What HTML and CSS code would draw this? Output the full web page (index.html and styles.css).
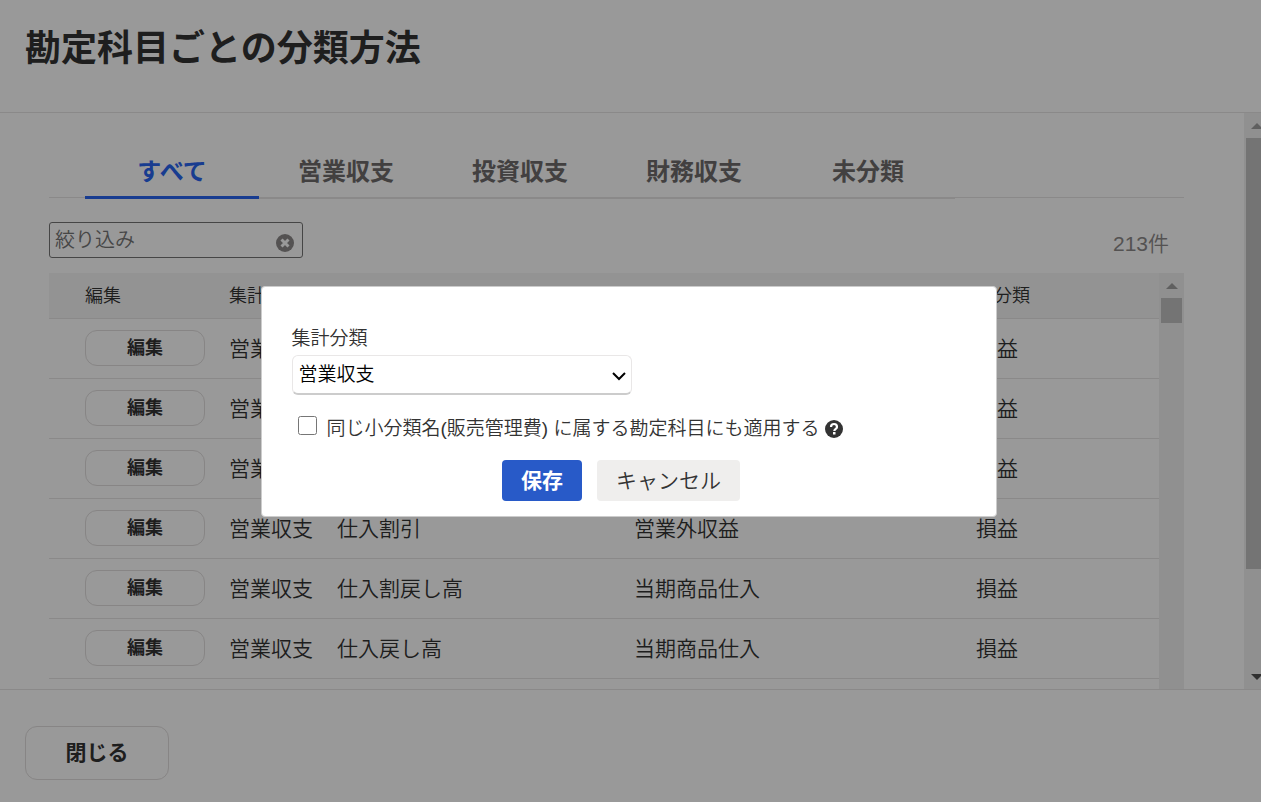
FILE: index.html
```html
<!DOCTYPE html>
<html lang="ja">
<head>
    <meta charset="UTF-8">
    <meta name="viewport" content="width=device-width, initial-scale=1.0">
    <title>勘定科目ごとの分類方法</title>
    <link rel="stylesheet" href="styles.css">
</head>
<body>
    <div class="page">
        <header class="page-header">
            <h1>勘定科目ごとの分類方法</h1>
        </header>

        <main class="page-body">
            <div class="content">
                <nav class="tabs">
                    <a href="#" class="tab active">すべて</a>
                    <a href="#" class="tab">営業収支</a>
                    <a href="#" class="tab">投資収支</a>
                    <a href="#" class="tab">財務収支</a>
                    <a href="#" class="tab">未分類</a>
                </nav>

                <div class="toolbar">
                    <div class="search">
                        <input type="text" placeholder="絞り込み" aria-label="絞り込み">
                        <button type="button" class="clear-btn" aria-label="クリア">
                            <svg viewBox="0 0 18 18" width="18" height="18">
                                <circle cx="9" cy="9" r="9" fill="#8c8989"/>
                                <path d="M5.500 5.500l7 7M12.500 5.500l-7 7" stroke="#fff" stroke-width="3"/>
                            </svg>
                        </button>
                    </div>
                    <span class="count">213件</span>
                </div>

                <div class="table-area">
                    <table>
                        <thead>
                            <tr>
                                <th class="col-edit">編集</th>
                                <th class="col-group">集計分類</th>
                                <th class="col-name">勘定科目名</th>
                                <th class="col-small">小分類</th>
                                <th>大分類</th>
                            </tr>
                        </thead>
                        <tbody>
                            <tr>
                                <td><button type="button" class="edit-btn">編集</button></td>
                                <td>営業収支</td>
                                <td>仕入高</td>
                                <td>当期商品仕入</td>
                                <td>損益</td>
                            </tr>
                            <tr>
                                <td><button type="button" class="edit-btn">編集</button></td>
                                <td>営業収支</td>
                                <td>仕入値引高</td>
                                <td>当期商品仕入</td>
                                <td>損益</td>
                            </tr>
                            <tr>
                                <td><button type="button" class="edit-btn">編集</button></td>
                                <td>営業収支</td>
                                <td>外注費</td>
                                <td>販売管理費</td>
                                <td>損益</td>
                            </tr>
                            <tr>
                                <td><button type="button" class="edit-btn">編集</button></td>
                                <td>営業収支</td>
                                <td>仕入割引</td>
                                <td>営業外収益</td>
                                <td>損益</td>
                            </tr>
                            <tr>
                                <td><button type="button" class="edit-btn">編集</button></td>
                                <td>営業収支</td>
                                <td>仕入割戻し高</td>
                                <td>当期商品仕入</td>
                                <td>損益</td>
                            </tr>
                            <tr>
                                <td><button type="button" class="edit-btn">編集</button></td>
                                <td>営業収支</td>
                                <td>仕入戻し高</td>
                                <td>当期商品仕入</td>
                                <td>損益</td>
                            </tr>
                        </tbody>
                    </table>
                    <div class="scrollbar">
                        <div class="arrow up"></div>
                        <div class="track"><div class="thumb small"></div></div>
                    </div>
                </div>
            </div>
            <div class="scrollbar page-scrollbar">
                <div class="arrow up"></div>
                <div class="track"><div class="thumb large"></div></div>
                <div class="arrow down"></div>
            </div>
        </main>

        <footer class="page-footer">
            <button type="button" class="close-btn">閉じる</button>
        </footer>
    </div>

    <div class="overlay">
        <form class="modal" role="dialog" aria-modal="true" aria-label="集計分類の編集">
            <label for="group">集計分類</label>
            <div class="select-box">
                <select id="group">
                    <option>営業収支</option>
                    <option>投資収支</option>
                    <option>財務収支</option>
                    <option>未分類</option>
                </select>
                <svg class="chevron" viewBox="0 0 14 10" width="14" height="10">
                    <path d="M1 2l6 6 6-6" fill="none" stroke="#000" stroke-width="2"/>
                </svg>
            </div>
            <div class="apply-row">
                <input type="checkbox" id="apply">
                <label for="apply">同じ小分類名(販売管理費) に属する勘定科目にも適用する</label>
                <svg class="help" viewBox="0 0 18 18" width="18" height="18">
                    <circle cx="9" cy="9" r="9" fill="#333"/>
                    <path d="M6 7c0-2 1-3 3-3s3 1 3 3c0 1.800-2.700 1.900-2.700 4" fill="none" stroke="#fff" stroke-width="2.200"/>
                    <rect x="8" y="12" width="2.500" height="2.500" fill="#fff"/>
                </svg>
            </div>
            <div class="modal-buttons">
                <button type="button" class="save-btn">保存</button>
                <button type="button" class="cancel-btn">キャンセル</button>
            </div>
        </form>
    </div>
</body>
</html>
```
FILE: styles.css
```css
* {
    box-sizing: border-box;
    margin: 0;
    padding: 0;
}

body {
    background-color: #fff;
    color: #333;
    font-family: "Liberation Sans", "Noto Sans CJK JP", sans-serif;
    font-weight: 350;
}

button,
input,
select {
    font-family: inherit;
    font-weight: inherit;
    color: inherit;
}

button {
    cursor: pointer;
}

.page {
    display: flex;
    flex-direction: column;
    height: 100vh;
    overflow: hidden;
}

/* Header */
.page-header {
    padding: 22px 25px 36px;
    border-bottom: 1px solid #e6e4e4;
}

.page-header h1 {
    font-size: 36px;
    line-height: 54px;
    font-weight: bold;
}

/* Body */
.page-body {
    flex: 1;
    min-height: 0;
    display: flex;
    overflow: hidden;
}

.content {
    flex: 1;
    min-width: 0;
    display: flex;
    flex-direction: column;
    padding: 33px 60px 0 49px;
}

/* Tabs */
.tabs {
    display: flex;
    height: 52px;
    padding-left: 36px;
    border-bottom: 1px solid #e6e4e4;
}

.tab {
    width: 174px;
    height: 53px;
    border-bottom: 2px solid #e6e4e4;
    color: #6e6b6b;
    font-size: 24px;
    line-height: 52px;
    font-weight: bold;
    text-align: center;
    text-decoration: none;
}

.tab.active {
    border-bottom: 3px solid #2864f0;
    color: #2864f0;
}

/* Search */
.toolbar {
    display: flex;
    justify-content: space-between;
    padding: 24px 15px 7px 0;
}

.search {
    position: relative;
    width: 254px;
}

.search input {
    width: 100%;
    height: 36px;
    padding: 0 36px 0 5px;
    border: 1px solid #767676;
    border-radius: 3px;
    background-color: #fff;
    font-size: 20px;
}

.search input::placeholder {
    color: #757575;
}

.clear-btn {
    position: absolute;
    top: 12px;
    right: 9px;
    width: 18px;
    height: 18px;
    border: none;
    background: none;
}

.clear-btn svg {
    display: block;
}

.count {
    color: #8c8989;
    font-size: 21px;
    line-height: 44px;
}

/* Table */
.table-area {
    flex: 1;
    min-height: 0;
    display: flex;
    overflow: hidden;
}

table {
    flex: 1;
    align-self: flex-start;
    table-layout: fixed;
    border-collapse: separate;
    border-spacing: 0;
}

th,
td {
    border-bottom: 1px solid #e6e4e4;
    text-align: left;
    white-space: nowrap;
}

th {
    height: 46px;
    padding-bottom: 4px;
    background-color: #f5f5f5;
    font-size: 18px;
    font-weight: inherit;
}

td {
    height: 60px;
    padding-bottom: 4px;
    font-size: 21px;
}

td:first-child {
    padding-bottom: 1px;
}

th:first-child,
td:first-child {
    padding-left: 36px;
}

.col-edit {
    width: 180px;
}

.col-group {
    width: 108px;
}

.col-name {
    width: 297px;
}

.col-small {
    width: 342px;
}

.edit-btn {
    display: block;
    width: 120px;
    height: 36px;
    padding-bottom: 4px;
    border: 1px solid #e1dede;
    border-radius: 12px;
    background-color: #fff;
    font-size: 18px;
    font-weight: bold;
}

/* Scrollbars */
.scrollbar {
    flex: none;
    display: flex;
    flex-direction: column;
    width: 25px;
    background-color: #f1f1f1;
}

.page-scrollbar {
    margin-right: -8px;
}

.arrow {
    display: flex;
    align-items: center;
    justify-content: center;
    height: 25px;
}

.arrow::before {
    content: "";
    border: 6px solid transparent;
}

.arrow.up::before {
    border-top: none;
    border-bottom-color: #a0a0a0;
}

.arrow.down::before {
    border-bottom: none;
    border-top-color: #505050;
}

.track {
    flex: 1;
    padding: 0 2px;
}

.thumb {
    background-color: #c1c1c1;
}

.thumb.small {
    height: 25px;
}

.thumb.large {
    height: 82%;
}

/* Footer */
.page-footer {
    padding: 36px 25px 22px;
    border-top: 1px solid #e6e4e4;
}

.close-btn {
    display: block;
    width: 144px;
    height: 54px;
    padding-bottom: 4px;
    border: 1px solid #e1dede;
    border-radius: 12px;
    background-color: #fff;
    font-size: 21px;
    font-weight: bold;
}

/* Modal */
.overlay {
    position: fixed;
    inset: 0;
    display: flex;
    align-items: center;
    justify-content: center;
    padding-right: 4px;
    background-color: rgba(0, 0, 0, 0.4);
}

.modal {
    width: 736px;
    padding: 36px 30px 15px;
    border: 1px solid #ccc;
    border-radius: 4px;
    background-color: #fff;
    font-size: 19px;
}

.modal label {
    display: block;
    line-height: 32px;
}

.select-box {
    position: relative;
    width: 340px;
}

.select-box select {
    appearance: none;
    display: block;
    width: 100%;
    height: 40px;
    padding: 0 30px 0 6px;
    border: 1px solid #e9e7e7;
    border-bottom: 2px solid #ccc;
    border-radius: 6px;
    background-color: #fff;
    color: #000;
    font-size: 19px;
}

.chevron {
    position: absolute;
    top: 16px;
    right: 6px;
    pointer-events: none;
}

.apply-row {
    display: flex;
    align-items: center;
    gap: 6px;
    margin-top: 18px;
    padding-left: 6px;
}

.apply-row input {
    width: 19px;
    height: 19px;
    margin: 0 4px 6px 0;
}

.modal-buttons {
    display: flex;
    justify-content: center;
    gap: 15px;
    margin-top: 15px;
    padding-right: 15px;
}

.modal-buttons button {
    height: 41px;
    padding: 0 18px 2px;
    border: 1px solid transparent;
    border-radius: 4px;
    font-size: 21px;
}

.modal-buttons .save-btn {
    background-color: #285ac8;
    color: #fff;
    font-weight: bold;
}

.modal-buttons .cancel-btn {
    background-color: #efeeed;
}
```
